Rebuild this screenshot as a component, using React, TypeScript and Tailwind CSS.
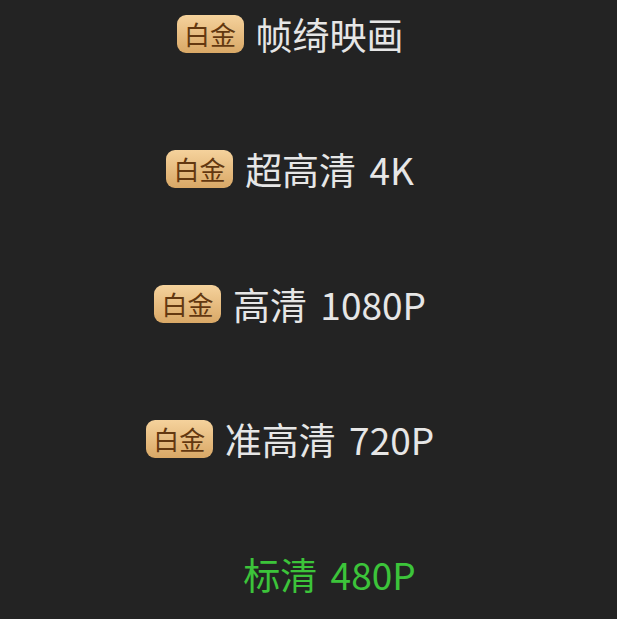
const rows = [
  { label: '帧绮映画', badge: true, green: false },
  { label: '超高清 4K', badge: true, green: false },
  { label: '高清 1080P', badge: true, green: false },
  { label: '准高清 720P', badge: true, green: false },
  { label: '标清 480P', badge: false, green: true },
]

const font = { fontFamily: '"Noto Sans CJK SC", "Noto Sans", sans-serif' }

function Badge({ hidden }: { hidden?: boolean }) {
  return (
    <span
      className={`flex h-[38px] w-[67px] items-center justify-center rounded-[9px] bg-gradient-to-b from-[#f5d29c] to-[#d9a866] text-[26px] leading-none text-[#633810] ${hidden ? 'invisible' : ''}`}
    >
      白金
    </span>
  )
}

export default function App() {
  return (
    <div className="h-[619px] w-[617px] overflow-hidden bg-[#232323]" style={font}>
      <div className="flex flex-col items-center gap-[95px] pt-[14px] pr-[37px]">
        {rows.map((r) => (
          <div key={r.label} className="flex h-[40px] items-center gap-[12px]">
            <Badge hidden={!r.badge} />
            <span
              className={`text-[37px] leading-none [word-spacing:5px] ${r.green ? 'text-[#3cc43a]' : 'text-[#e6e6e6]'}`}
            >
              {r.label}
            </span>
          </div>
        ))}
      </div>
    </div>
  )
}
